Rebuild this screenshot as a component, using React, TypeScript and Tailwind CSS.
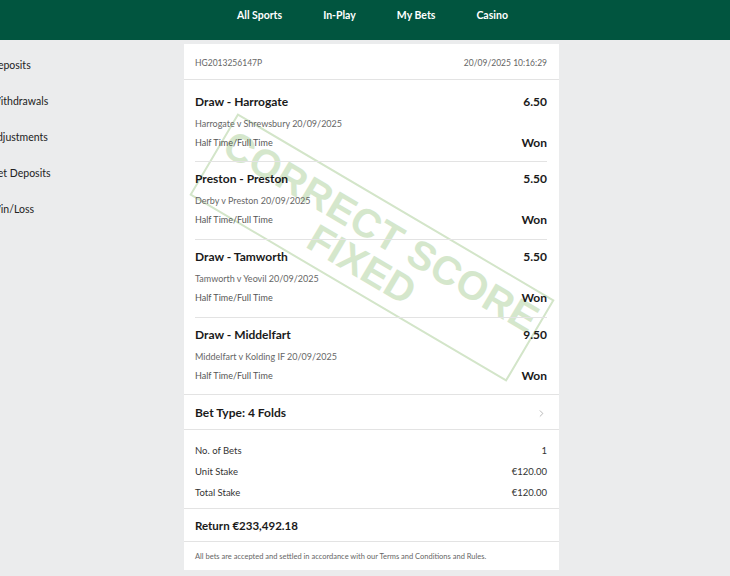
import React from 'react';
import { ChevronRight } from 'lucide-react';

interface Selection {
  pick: string;
  odds: string;
  event: string;
  market: string;
  result: string;
}

const selections: Selection[] = [
  { pick: 'Draw - Harrogate', odds: '6.50', event: 'Harrogate v Shrewsbury 20/09/2025', market: 'Half Time/Full Time', result: 'Won' },
  { pick: 'Preston - Preston', odds: '5.50', event: 'Derby v Preston 20/09/2025', market: 'Half Time/Full Time', result: 'Won' },
  { pick: 'Draw - Tamworth', odds: '5.50', event: 'Tamworth v Yeovil 20/09/2025', market: 'Half Time/Full Time', result: 'Won' },
  { pick: 'Draw - Middelfart', odds: '9.50', event: 'Middelfart v Kolding IF 20/09/2025', market: 'Half Time/Full Time', result: 'Won' },
];

const navItems = ['All Sports', 'In-Play', 'My Bets', 'Casino'];
const sideItems = ['Deposits', 'Withdrawals', 'Adjustments', 'Net Deposits', 'Win/Loss'];

const stakeRows = [
  { label: 'No. of Bets', value: '1' },
  { label: 'Unit Stake', value: '€120.00' },
  { label: 'Total Stake', value: '€120.00' },
];

const App: React.FC = () => {
  return (
    <div className="min-h-[576px] w-[730px] bg-[#ebeced] font-['Lato','Noto_Sans',sans-serif] overflow-hidden">
      <header className="h-10 bg-[#01553f] flex pl-[237px] gap-[41px] pt-[8px]">
        {navItems.map((item) => (
          <span key={item} className="text-white font-bold text-[10.5px] leading-[14px]">
            {item}
          </span>
        ))}
      </header>

      <div className="flex">
        <nav className="w-[184px] shrink-0 overflow-hidden pt-[8px]">
          {sideItems.map((item) => (
            <div key={item} className="h-9 flex items-center ml-[-10px] text-[10.5px] text-[#222] whitespace-nowrap">
              {item}
            </div>
          ))}
        </nav>

        <div className="relative mt-1 w-[375px] bg-white overflow-hidden">
          {/* stamp watermark */}
          <div className="pointer-events-none absolute left-[4px] top-[156px] w-[368px] h-[95px] rotate-[30.5deg] border-2 border-[#d3e5c9] flex flex-col items-center justify-center font-['Liberation_Sans',sans-serif] font-bold text-[#d5e7cc] leading-[38px]">
            <span className="text-[40px] tracking-[0.5px]">CORRECT SCORE</span>
            <span className="text-[40px]">FIXED</span>
          </div>

          <div className="relative">
            <div className="h-9 flex items-center justify-between pl-[11px] pr-3 border-b border-[#e3e3e3] text-[8.5px] text-[#666] pt-[3px]">
              <span>HG2013256147P</span>
              <span>20/09/2025 10:16:29</span>
            </div>

            <div className="pl-[11px] pr-3 pt-[5px]">
              {selections.map((s, i) => (
                <div
                  key={s.pick}
                  className={`pt-[9px] ${
                    i === 0
                      ? 'pb-[10px] border-b border-[#e3e3e3]'
                      : i < selections.length - 1
                        ? 'pb-[11px] border-b border-[#e3e3e3]'
                        : 'pb-[10px]'
                  }`}
                >
                  <div className="flex justify-between text-[12px] font-bold text-[#1a1a1a] leading-4">
                    <span>{s.pick}</span>
                    <span>{s.odds}</span>
                  </div>
                  <div className="mt-[7px] text-[9px] leading-[14px] text-[#666]">{s.event}</div>
                  <div className="mt-[4px] flex justify-between items-center leading-4">
                    <span className="text-[9px] text-[#555]">{s.market}</span>
                    <span className="text-[12px] font-bold text-[#1a1a1a]">{s.result}</span>
                  </div>
                </div>
              ))}
            </div>

            <div className="h-9 flex items-center justify-between pl-[11px] pr-3 pt-[2px] border-y border-[#e3e3e3]">
              <span className="text-[12px] font-bold text-[#1a1a1a]">Bet Type: 4 Folds</span>
              <ChevronRight size={11} strokeWidth={1.5} className="text-[#999]" />
            </div>

            <div className="pl-[11px] pr-3 pt-[10px] pb-[5px] border-b border-[#e3e3e3]">
              {stakeRows.map((r) => (
                <div key={r.label} className="flex justify-between text-[9.5px] leading-[21px] text-[#333]">
                  <span>{r.label}</span>
                  <span>{r.value}</span>
                </div>
              ))}
            </div>

            <div className="h-[33px] flex items-center pl-[11px] pt-[2px] border-b border-[#e3e3e3] text-[11.5px] font-bold text-[#1a1a1a]">
              Return €233,492.18
            </div>

            <div className="h-[28px] flex items-center pl-[11px] pt-[2px] text-[7.5px] text-[#666]">
              All bets are accepted and settled in accordance with our Terms and Conditions and Rules.
            </div>
          </div>
        </div>
      </div>
    </div>
  );
};

export default App;
